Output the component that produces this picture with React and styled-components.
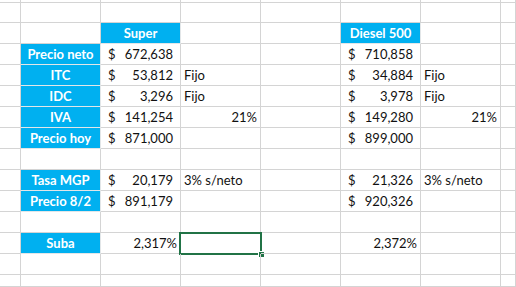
import React from "react";
import styled, { createGlobalStyle } from "styled-components";

const GlobalStyle = createGlobalStyle`
  html, body {
    margin: 0;
    padding: 0;
    background: #ffffff;
    overflow: hidden;
  }
  body {
    font-family: Lato, "Open Sans", "Liberation Sans", sans-serif;
  }
`;

const Sheet = styled.div`
  display: grid;
  grid-template-columns: 21px repeat(6, 80px) 1fr;
  grid-template-rows: 2px repeat(13, 21px) 1fr;
  width: 516px;
  height: 287px;
  background: #ffffff;
`;

const Cell = styled.div`
  position: relative;
  box-sizing: border-box;
  border-right: 1px solid #d4d4d4;
  border-bottom: 1px solid #d4d4d4;
  display: flex;
  align-items: flex-end;
  justify-content: ${({ $align }) => $align || "flex-start"};
  padding: 0 ${({ $pr }) => $pr ?? 3}px 2px ${({ $pl }) => $pl ?? 3}px;
  font-size: 13px;
  line-height: 16px;
  color: #111;
  white-space: nowrap;
`;

const BlueCell = styled(Cell)`
  background: #00b0f0;
  border-right-color: #e2e6e8;
  border-bottom-color: #e2e6e8;
  justify-content: center;
  color: #ffffff;
  font-weight: 700;
  padding: 0 0 2px 0;
`;

const Money = styled(Cell)`
  justify-content: space-between;
  padding: 0 7px 2px 7px;
`;

const Selection = styled.div`
  position: absolute;
  top: -1px;
  left: -2px;
  right: -2px;
  bottom: -2px;
  border: 2px solid #217346;
  pointer-events: none;
`;

const Handle = styled.span`
  position: absolute;
  right: -4px;
  bottom: -4px;
  width: 5px;
  height: 5px;
  background: #217346;
  outline: 1px solid #ffffff;
`;

const rows = [
  { label: "Precio neto", s: "672,638", d: "710,858" },
  { label: "ITC", s: "53,812", sn: "Fijo", d: "34,884", dn: "Fijo" },
  { label: "IDC", s: "3,296", sn: "Fijo", d: "3,978", dn: "Fijo" },
  { label: "IVA", s: "141,254", sp: "21%", d: "149,280", dp: "21%" },
  { label: "Precio hoy", s: "871,000", d: "899,000" },
  {},
  { label: "Tasa MGP", s: "20,179", sn: "3% s/neto", d: "21,326", dn: "3% s/neto" },
  { label: "Precio 8/2", s: "891,179", d: "920,326" },
  {},
  { label: "Suba", sr: "2,317%", dr: "2,372%", selected: true },
  {},
];

const Value = ({ money, pct }) => {
  if (money)
    return (
      <Money>
        <span>$</span>
        <span>{money}</span>
      </Money>
    );
  if (pct)
    return (
      <Cell $align="flex-end" $pr={3}>
        {pct}
      </Cell>
    );
  return <Cell />;
};

const Note = ({ text, pct, selected }) => {
  if (pct)
    return (
      <Cell $align="flex-end" $pr={3}>
        {pct}
      </Cell>
    );
  return (
    <Cell>
      {text}
      {selected && (
        <Selection>
          <Handle />
        </Selection>
      )}
    </Cell>
  );
};

const EmptyRow = () =>
  Array.from({ length: 8 }).map((_, i) => <Cell key={i} />);

export default function App() {
  return (
    <>
      <GlobalStyle />
      <Sheet>
        <EmptyRow />
        <EmptyRow />

        <Cell />
        <Cell />
        <BlueCell>Super</BlueCell>
        <Cell />
        <Cell />
        <BlueCell>Diesel 500</BlueCell>
        <Cell />
        <Cell />

        {rows.map((r, i) =>
          r.label ? (
            <React.Fragment key={i}>
              <Cell />
              <BlueCell>{r.label}</BlueCell>
              <Value money={r.s} pct={r.sr} />
              <Note text={r.sn} pct={r.sp} selected={r.selected} />
              <Cell />
              <Value money={r.d} pct={r.dr} />
              <Note text={r.dn} pct={r.dp} />
              <Cell />
            </React.Fragment>
          ) : (
            <EmptyRow key={i} />
          )
        )}

        <EmptyRow />
      </Sheet>
    </>
  );
}
